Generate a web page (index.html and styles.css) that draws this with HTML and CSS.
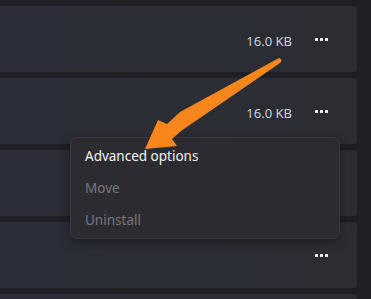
FILE: index.html
```html
<!DOCTYPE html>
<html>
<head>
<meta charset="utf-8">
<link rel="stylesheet" href="styles.css">
</head>
<body>
<div class="page">
  <div class="list">
    <div class="card"></div>
    <div class="card">
      <span class="size">16.0 KB</span>
      <button class="more"><span></span><span></span><span></span></button>
    </div>
    <div class="card">
      <span class="size">16.0 KB</span>
      <button class="more"><span></span><span></span><span></span></button>
    </div>
    <div class="card"></div>
    <div class="card">
      <button class="more"><span></span><span></span><span></span></button>
    </div>
    <div class="card"></div>
  </div>
  <div class="menu">
    <div class="item">Advanced options</div>
    <div class="item disabled">Move</div>
    <div class="item disabled">Uninstall</div>
  </div>
  <svg class="arrow" width="371" height="299" viewBox="0 0 371 299">
    <path d="M279,58 C282,59 282,62 280,63 L181,131 L172,139 L177,146 L145,149 L158,120 L167,124 L180,112 Z" fill="#f7861c"/>
  </svg>
</div>
</body>
</html>
```
FILE: styles.css
```css
html, body {
  margin: 0;
  padding: 0;
  background: #1f2025;
  font-family: "Noto Sans", "Open Sans", sans-serif;
  overflow: hidden;
}
.page {
  position: relative;
  width: 371px;
  height: 299px;
  overflow: hidden;
}
.list {
  display: flex;
  flex-direction: column;
  gap: 6px;
  margin-top: -66px;
  margin-left: -20px;
  width: 377px;
}
.card {
  height: 66px;
  flex: none;
  box-sizing: border-box;
  border-radius: 4px;
  background: linear-gradient(90deg, #2a2d39 0%, #2b2d35 45%, #2c2d33 100%);
  display: flex;
  align-items: center;
  justify-content: flex-end;
  padding-right: 20px;
}
.size {
  color: #cfcfd2;
  font-size: 13px;
  margin-right: 13px;
  margin-top: 3px;
}
.more {
  width: 32px;
  height: 28px;
  border: none;
  background: transparent;
  padding: 0;
  display: flex;
  align-items: center;
  justify-content: center;
  gap: 2px;
}
.more span {
  width: 3px;
  height: 3px;
  background: #f2f2f2;
  border-radius: 0.5px;
}
.menu {
  position: absolute;
  left: 70px;
  top: 137px;
  width: 270px;
  box-sizing: border-box;
  padding: 2px 0;
  background: #2c2c30;
  border: 1px solid #38383d;
  border-radius: 7px;
  box-shadow: 0 4px 12px rgba(0,0,0,0.35);
}
.item {
  height: 32px;
  display: flex;
  align-items: center;
  padding-left: 14px;
  font-size: 13.5px;
  color: #f4f4f4;
}
.item.disabled {
  color: #77777b;
}
.arrow {
  position: absolute;
  left: 0;
  top: 0;
}
```
